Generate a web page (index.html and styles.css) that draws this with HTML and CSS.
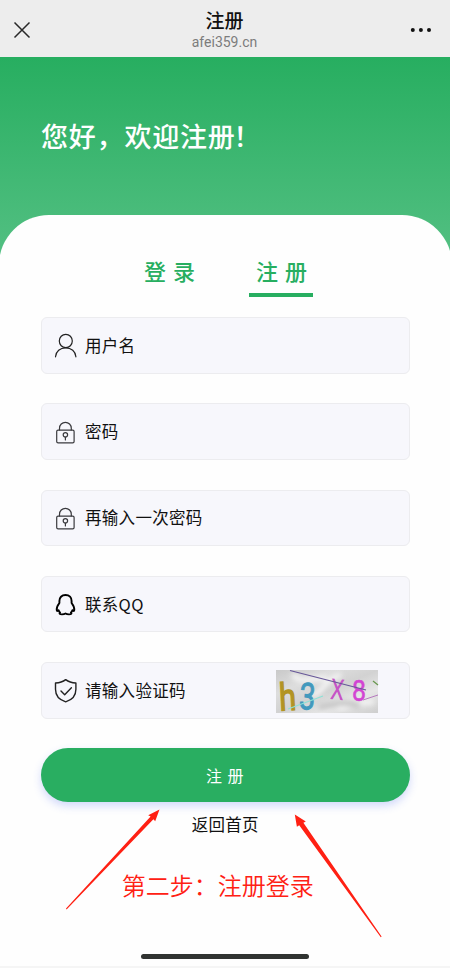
FILE: index.html
```html
<!DOCTYPE html>
<html lang="zh-CN">
<head>
<meta charset="utf-8">
<meta name="viewport" content="width=device-width, initial-scale=1">
<title>注册</title>
<link rel="stylesheet" href="styles.css">
</head>
<body>
<div class="screen">
  <header class="topbar">
    <svg class="close" viewBox="0 0 18 18"><path d="M1.5 1.5 16.5 16.5M16.5 1.5 1.5 16.5"/></svg>
    <div class="heading">
      <div class="title">注册</div>
      <div class="domain">afei359.cn</div>
    </div>
    <svg class="more" viewBox="0 0 22 6"><circle cx="2.8" cy="3" r="2"/><circle cx="10.9" cy="3" r="2"/><circle cx="19" cy="3" r="2"/></svg>
  </header>
  <section class="hero"><h1>您好，欢迎注册<span class="mark">！</span></h1></section>
  <main class="card">
    <nav class="tabs">
      <a class="tab">登 录</a>
      <a class="tab active">注 册</a>
    </nav>
    <form class="form">
      <div class="field">
        <svg class="icon" viewBox="0 0 24 26"><ellipse cx="11.8" cy="9" rx="6.5" ry="6.7"/><path d="M1.5 24.8C1.9 19.2 6.1 15.8 11.7 15.8S21.5 19.2 21.9 24.8"/></svg>
        <span class="label">用户名</span>
      </div>
      <div class="field">
        <svg class="icon lock" viewBox="0 0 24 26"><rect x="2.7" y="11.2" width="17.4" height="12.6" rx="1.4"/><path d="M5.5 11V9.2a5.9 5.9 0 0 1 11.8 0V11"/><circle cx="11.4" cy="15.8" r="2.2"/><path d="M11.4 18v3"/></svg>
        <span class="label">密码</span>
      </div>
      <div class="field">
        <svg class="icon lock" viewBox="0 0 24 26"><rect x="2.7" y="11.2" width="17.4" height="12.6" rx="1.4"/><path d="M5.5 11V9.2a5.9 5.9 0 0 1 11.8 0V11"/><circle cx="11.4" cy="15.8" r="2.2"/><path d="M11.4 18v3"/></svg>
        <span class="label">再输入一次密码</span>
      </div>
      <div class="field">
        <svg class="icon qq" viewBox="0 0 24 26"><path d="M11.5 4C7.6 4 5.4 6.6 5.4 10V12C3.6 14.4 2.5 16.8 2.7 19C2.8 20.4 3.8 20.2 4.6 19.2C4.9 20.1 5.4 20.9 6.1 21.6C4.9 22.6 5.8 23.4 8 23.4C9.7 23.4 10.6 23.1 11.5 22.5C12.4 23.1 13.3 23.4 15 23.4C17.2 23.4 18.1 22.6 16.9 21.6C17.6 20.9 18.1 20.1 18.4 19.2C19.2 20.2 20.2 20.4 20.3 19C20.5 16.8 19.4 14.4 17.6 12V10C17.6 6.6 15.4 4 11.5 4Z"/></svg>
        <span class="label">联系QQ</span>
      </div>
      <div class="field">
        <svg class="icon shield" viewBox="0 0 24 26"><path d="M11.7 2.6C8.7 5 5.3 5.9 1.5 6V12.3C1.5 18.8 5.5 23 11.7 24.8C17.9 23 21.9 18.8 21.9 12.3V6C18.1 5.9 14.7 5 11.7 2.6Z"/><path d="M7 14 10.7 17.8 17.4 10.8"/></svg>
        <span class="label">请输入验证码</span>
        <svg class="captcha" viewBox="0 0 102 43">
          <defs>
            <linearGradient id="paper" x1="0" y1="0" x2="1" y2="1"><stop offset="0" stop-color="#c9c9c9"/><stop offset=".28" stop-color="#dddddd"/><stop offset=".5" stop-color="#d2d2d2"/><stop offset=".72" stop-color="#e6e6e6"/><stop offset="1" stop-color="#cecece"/></linearGradient>
            <filter id="soft"><feGaussianBlur stdDeviation="2.5"/></filter>
          </defs>
          <rect width="102" height="43" fill="url(#paper)"/>
          <g filter="url(#soft)" fill="none" stroke-width="5"><path d="M17 4C20 12 30 10 51 8M36 26C48 22 48 9 65 5M62 38C73 36 81 32 98 32" stroke="#f4f4f4"/><path d="M43 37C61 34 67 31 84 36" stroke="#c4c4c4"/></g>
          <g class="captcha-text">
            <text x="3" y="40.5" font-size="38" fill="#b29423" stroke="#b29423" stroke-width="1.3" transform="rotate(-3 10 28)" textLength="17" lengthAdjust="spacingAndGlyphs">h</text>
            <text x="23.5" y="39.5" font-size="37" fill="#4299bd" stroke="#4299bd" stroke-width="1" transform="rotate(4 32 26)" textLength="16" lengthAdjust="spacingAndGlyphs">3</text>
            <text x="54.5" y="29.5" font-size="29" fill="#c653c6" transform="rotate(5 61 19)" textLength="14" lengthAdjust="spacingAndGlyphs">X</text>
            <text x="76" y="30.5" font-size="29" fill="#d344d3" stroke="#d344d3" stroke-width=".6" textLength="14" lengthAdjust="spacingAndGlyphs">8</text>
          </g>
          <g fill="none"><path d="M14 .5 90 20" stroke="#675798" stroke-width="1.2"/><path d="M12 39 47 26" stroke="#8de1d6" stroke-width="1.2"/><path d="M87 30 102 25" stroke="#b67abe"/><path d="M97 11 102 15" stroke="#66964b" stroke-width="1.3"/></g>
        </svg>
      </div>
      <button class="submit" type="button">注 册</button>
    </form>
    <a class="home">返回首页</a>
    <p class="caption">第二步：注册登录</p>
    <div class="homebar"></div>
  </main>
  <div class="edge"></div>
  <svg class="arrows" viewBox="0 0 450 968">
    <path d="M66 908.6 150.6 816.6 148.2 815.3 159.5 809.5 155.2 821.2 153.4 819.2 66.6 909.4Z"/>
    <path d="M381.6 936.6 303.4 822.7 305.8 821.5 294.8 814.5 296.9 826.8 299.2 825.2 380.8 937.2Z"/>
  </svg>
</div>
</body>
</html>
```
FILE: styles.css
```css
* { box-sizing: border-box; }
body { margin: 0; background: #fff; font-family: "Noto Sans CJK SC", sans-serif; color: #111; }
.screen { position: relative; height: 968px; display: flex; flex-direction: column; overflow: hidden; background: #fefefe; }
.topbar { height: 57px; flex: none; display: flex; align-items: center; justify-content: space-between; padding: 3px 18px 0 13px; background: #ededed; }
.close { width: 18px; height: 18px; fill: none; stroke: #292929; stroke-width: 1.5; }
.more { width: 22px; height: 6px; fill: #111; }
.heading { width: 120px; margin-left: 8px; text-align: center; }
.title { font-size: 19px; line-height: 24px; font-weight: 500; }
.domain { font: 14px/20px Roboto, sans-serif; color: #7c7c7c; }
.hero { height: 206px; flex: none; padding: 59px 41px 0; background: linear-gradient(#27ae60, #54c083); }
.hero h1 { margin: 0; font-size: 27px; line-height: 40px; font-weight: 500; letter-spacing: .8px; color: #fff; white-space: nowrap; }
.mark { margin-left: -2px; }
.card { flex: 1; margin: -48px -1.5px 0; padding: 39px 42px 0 42.5px; border-radius: 50px 50px 0 0; background: #fefefe; display: flex; flex-direction: column; align-items: center; }
.tabs { display: flex; gap: 48px; align-self: flex-start; margin-left: 96px; }
.tab { width: 64px; height: 43px; padding-left: 2px; text-align: center; font-size: 22px; line-height: 33px; font-weight: 500; letter-spacing: 1px; color: #27ae60; white-space: nowrap; border-bottom: 4px solid transparent; }
.tab.active { border-color: #27ae60; }
.form { width: 100%; margin-top: 20px; display: flex; flex-direction: column; gap: 29.75px; }
.field { height: 56.5px; display: flex; align-items: center; padding: 0 31px 0 12px; border: 1px solid #ececef; border-radius: 6px; background: #f7f7fc; }
.icon { width: 24px; height: 26px; flex: none; fill: none; stroke: #222; stroke-width: 1.2; stroke-linecap: round; stroke-linejoin: round; }
.lock { stroke: #3a3a3e; }
.qq { stroke: #000; stroke-width: 1.9; }
.shield { stroke-width: 1.4; }
.label { margin-left: 7px; font-size: 16.5px; line-height: 25px; letter-spacing: .3px; color: #111; white-space: nowrap; }
.captcha { width: 102px; height: 43px; margin-left: auto; margin-top: 2px; flex: none; overflow: visible; }
.captcha-text { font-family: Roboto, sans-serif; }
.submit { height: 54px; border: 0; border-radius: 27px; background: #29ae61; color: #fff; font: 16px/24px "Noto Sans CJK SC", sans-serif; letter-spacing: 1px; box-shadow: 0 4px 9px rgba(73, 99, 240, .24); }
.home { margin-top: 10px; font-size: 16.5px; line-height: 25px; letter-spacing: .2px; color: #111; }
.caption { margin: 30px 15px 0 0; font-size: 24px; line-height: 36px; font-weight: 350; color: #ff2013; white-space: nowrap; }
.homebar { width: 168px; height: 5px; margin: auto 0 7px; border-radius: 3px; background: #303331; }
.edge { height: 2px; flex: none; background: #f5f5f5; }
.arrows { position: absolute; inset: 0; width: 450px; height: 968px; fill: #ff2013; pointer-events: none; }
```
